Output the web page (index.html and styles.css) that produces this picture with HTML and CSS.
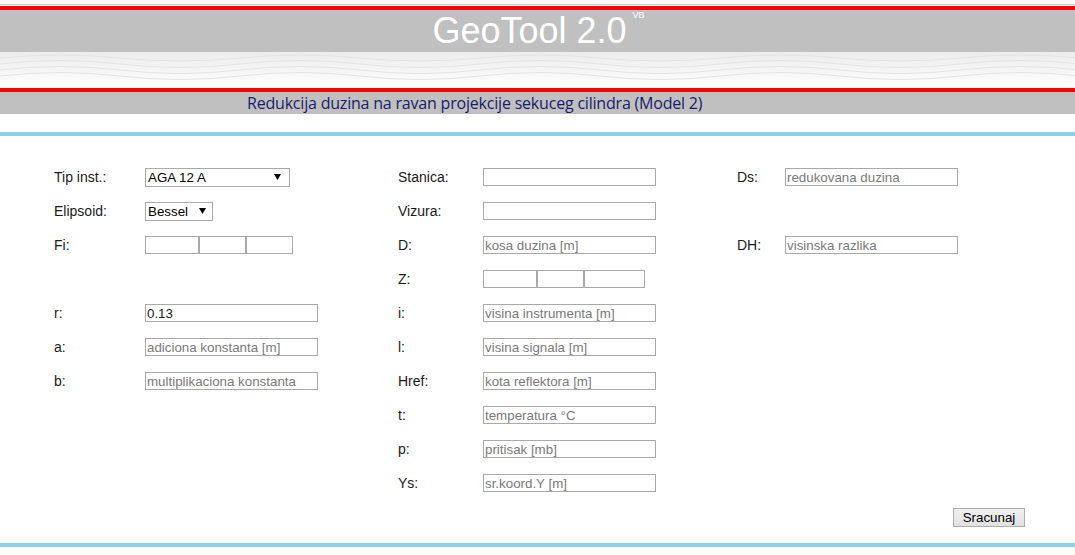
FILE: index.html
```html
<!DOCTYPE html>
<html>
<head>
<meta charset="utf-8">
<title>GeoTool 2.0</title>
<link rel="stylesheet" href="styles.css">
</head>
<body>
<header class="header">
  <div class="topline"></div>
  <div class="redline"></div>
  <div class="titlebar"><h1 class="title">GeoTool 2.0<sup class="ver">VB</sup></h1></div>
  <svg class="waves" viewBox="0 0 1075 36" preserveAspectRatio="none" aria-hidden="true">
    <defs>
      <linearGradient id="wg" x1="0" y1="0" x2="0" y2="1">
        <stop offset="0" stop-color="#ececec"/>
        <stop offset="1" stop-color="#ffffff"/>
      </linearGradient>
    </defs>
    <rect width="1075" height="36" fill="url(#wg)"/>
    <g fill="none" stroke="#e4e4e4" stroke-width="1">
      <path d="M0 6 Q60 0 120 6 T240 6 T360 6 T480 6 T600 6 T720 6 T840 6 T960 6 T1080 6"/>
      <path d="M0 12 Q60 5 120 12 T240 12 T360 12 T480 12 T600 12 T720 12 T840 12 T960 12 T1080 12"/>
      <path d="M0 18 Q60 11 120 18 T240 18 T360 18 T480 18 T600 18 T720 18 T840 18 T960 18 T1080 18"/>
      <path d="M0 24 Q60 17 120 24 T240 24 T360 24 T480 24 T600 24 T720 24 T840 24 T960 24 T1080 24"/>
    </g>
  </svg>
  <div class="redline"></div>
  <div class="subbar"><h2 class="subtitle">Redukcija duzina na ravan projekcije sekuceg cilindra (Model 2)</h2></div>
</header>
<div class="blueline top-blue"></div>

<main class="form">
  <div class="grid">
    <label class="lbl">Tip inst.:</label>
    <div class="cell"><select class="sel sel-wide"><option>AGA 12 A</option></select></div>
    <label class="lbl">Stanica:</label>
    <div class="cell"><input class="inp" type="text"></div>
    <label class="lbl">Ds:</label>
    <div class="cell"><input class="inp" type="text" placeholder="redukovana duzina"></div>

    <label class="lbl">Elipsoid:</label>
    <div class="cell"><select class="sel sel-narrow"><option>Bessel</option></select></div>
    <label class="lbl">Vizura:</label>
    <div class="cell"><input class="inp" type="text"></div>
    <span></span><span></span>

    <label class="lbl">Fi:</label>
    <div class="cell triple"><input class="inp w54" type="text"><input class="inp w47" type="text"><input class="inp w47" type="text"></div>
    <label class="lbl">D:</label>
    <div class="cell"><input class="inp" type="text" placeholder="kosa duzina [m]"></div>
    <label class="lbl">DH:</label>
    <div class="cell"><input class="inp" type="text" placeholder="visinska razlika"></div>

    <span></span><span></span>
    <label class="lbl">Z:</label>
    <div class="cell triple"><input class="inp w54" type="text"><input class="inp w47" type="text"><input class="inp w61" type="text"></div>
    <span></span><span></span>

    <label class="lbl">r:</label>
    <div class="cell"><input class="inp" type="text" value="0.13"></div>
    <label class="lbl">i:</label>
    <div class="cell"><input class="inp" type="text" placeholder="visina instrumenta [m]"></div>
    <span></span><span></span>

    <label class="lbl">a:</label>
    <div class="cell"><input class="inp" type="text" placeholder="adiciona konstanta [m]"></div>
    <label class="lbl">l:</label>
    <div class="cell"><input class="inp" type="text" placeholder="visina signala [m]"></div>
    <span></span><span></span>

    <label class="lbl">b:</label>
    <div class="cell"><input class="inp" type="text" placeholder="multiplikaciona konstanta"></div>
    <label class="lbl">Href:</label>
    <div class="cell"><input class="inp" type="text" placeholder="kota reflektora [m]"></div>
    <span></span><span></span>

    <span></span><span></span>
    <label class="lbl">t:</label>
    <div class="cell"><input class="inp" type="text" placeholder="temperatura °C"></div>
    <span></span><span></span>

    <span></span><span></span>
    <label class="lbl">p:</label>
    <div class="cell"><input class="inp" type="text" placeholder="pritisak [mb]"></div>
    <span></span><span></span>

    <span></span><span></span>
    <label class="lbl">Ys:</label>
    <div class="cell"><input class="inp" type="text" placeholder="sr.koord.Y [m]"></div>
    <span></span><span></span>
  </div>
  <div class="actions"><button class="btn" type="button">Sracunaj</button></div>
</main>
<div class="blueline bottom-blue"></div>
</body>
</html>
```

FILE: styles.css
```css
html, body {
  margin: 0;
  padding: 0;
  background: #ffffff;
  font-family: "Liberation Sans", Arial, sans-serif;
}

.header {
  display: flex;
  flex-direction: column;
}

.topline {
  height: 1px;
  margin-top: 4px;
  background: #cfcfcf;
}

.redline {
  height: 4px;
  margin-top: 1px;
  background: #ff0000;
}

.titlebar {
  height: 42px;
  background: #c0c0c0;
  display: flex;
  justify-content: center;
}

.title {
  margin: 0;
  padding-right: 16px;
  font-family: "Liberation Sans", Arial, sans-serif;
  font-weight: normal;
  font-size: 36px;
  line-height: 42px;
  color: #ffffff;
  position: relative;
}

.ver {
  font-size: 9px;
  position: absolute;
  top: -16px;
  margin-left: 6px;
  line-height: 42px;
  color: #ffffff;
}

.waves {
  display: block;
  width: 100%;
  height: 36px;
}

.waves + .redline { margin-top: 0; }

.subbar {
  height: 22px;
  background: #c0c0c0;
  display: flex;
  align-items: center;
}

.subtitle {
  margin: 0;
  padding-left: 247px;
  font-family: "Open Sans", sans-serif;
  font-weight: normal;
  font-size: 16px;
  letter-spacing: -0.2px;
  color: #1b1b6b;
  line-height: 22px;
}

.blueline {
  height: 4px;
  background: #8dcfe6;
}

.top-blue { margin-top: 18px; }

.form {
  padding: 24px 50px 0 54px;
}

.grid {
  display: grid;
  grid-template-columns: 91px 253px 85px 254px 48px 1fr;
  grid-auto-rows: 34px;
  align-items: center;
}

.lbl {
  font-size: 14px;
  color: #1a1a1a;
}

.cell {
  display: flex;
}

.inp {
  box-sizing: border-box;
  width: 173px;
  height: 18px;
  margin: 0;
  padding: 0 1px;
  border: 1px solid #a9a9a9;
  font-family: "Liberation Sans", Arial, sans-serif;
  font-size: 13.33px;
  color: #222;
  background: #fff;
}

.inp::placeholder { color: #7a7a7a; opacity: 1; }

.w54 { width: 54px; }
.w47 { width: 47px; }
.w61 { width: 61px; }

.sel {
  box-sizing: border-box;
  height: 19px;
  margin: 0;
  padding: 0 0 0 2px;
  border: 1px solid #a9a9a9;
  border-radius: 0;
  appearance: none;
  -webkit-appearance: none;
  font-family: "Liberation Sans", Arial, sans-serif;
  font-size: 13.33px;
  color: #000;
  background-color: #fff;
  background-image: url("data:image/svg+xml;utf8,<svg xmlns='http://www.w3.org/2000/svg' width='7' height='6'><path d='M0 0H7L3.5 6Z' fill='black'/></svg>");
  background-repeat: no-repeat;
}

.sel-wide { width: 145px; background-position: right 8px center; }
.sel-narrow { width: 68px; background-position: right 6px center; }

.actions {
  display: flex;
  justify-content: flex-end;
  padding-top: 8px;
  padding-bottom: 16px;
}

.btn {
  box-sizing: border-box;
  width: 72px;
  height: 19px;
  padding: 0;
  font-family: "Liberation Sans", Arial, sans-serif;
  font-size: 13.33px;
  color: #000;
  border: 1px solid #adadad;
  border-radius: 0;
  background: linear-gradient(#f0f0f0, #e1e1e1);
}
```
